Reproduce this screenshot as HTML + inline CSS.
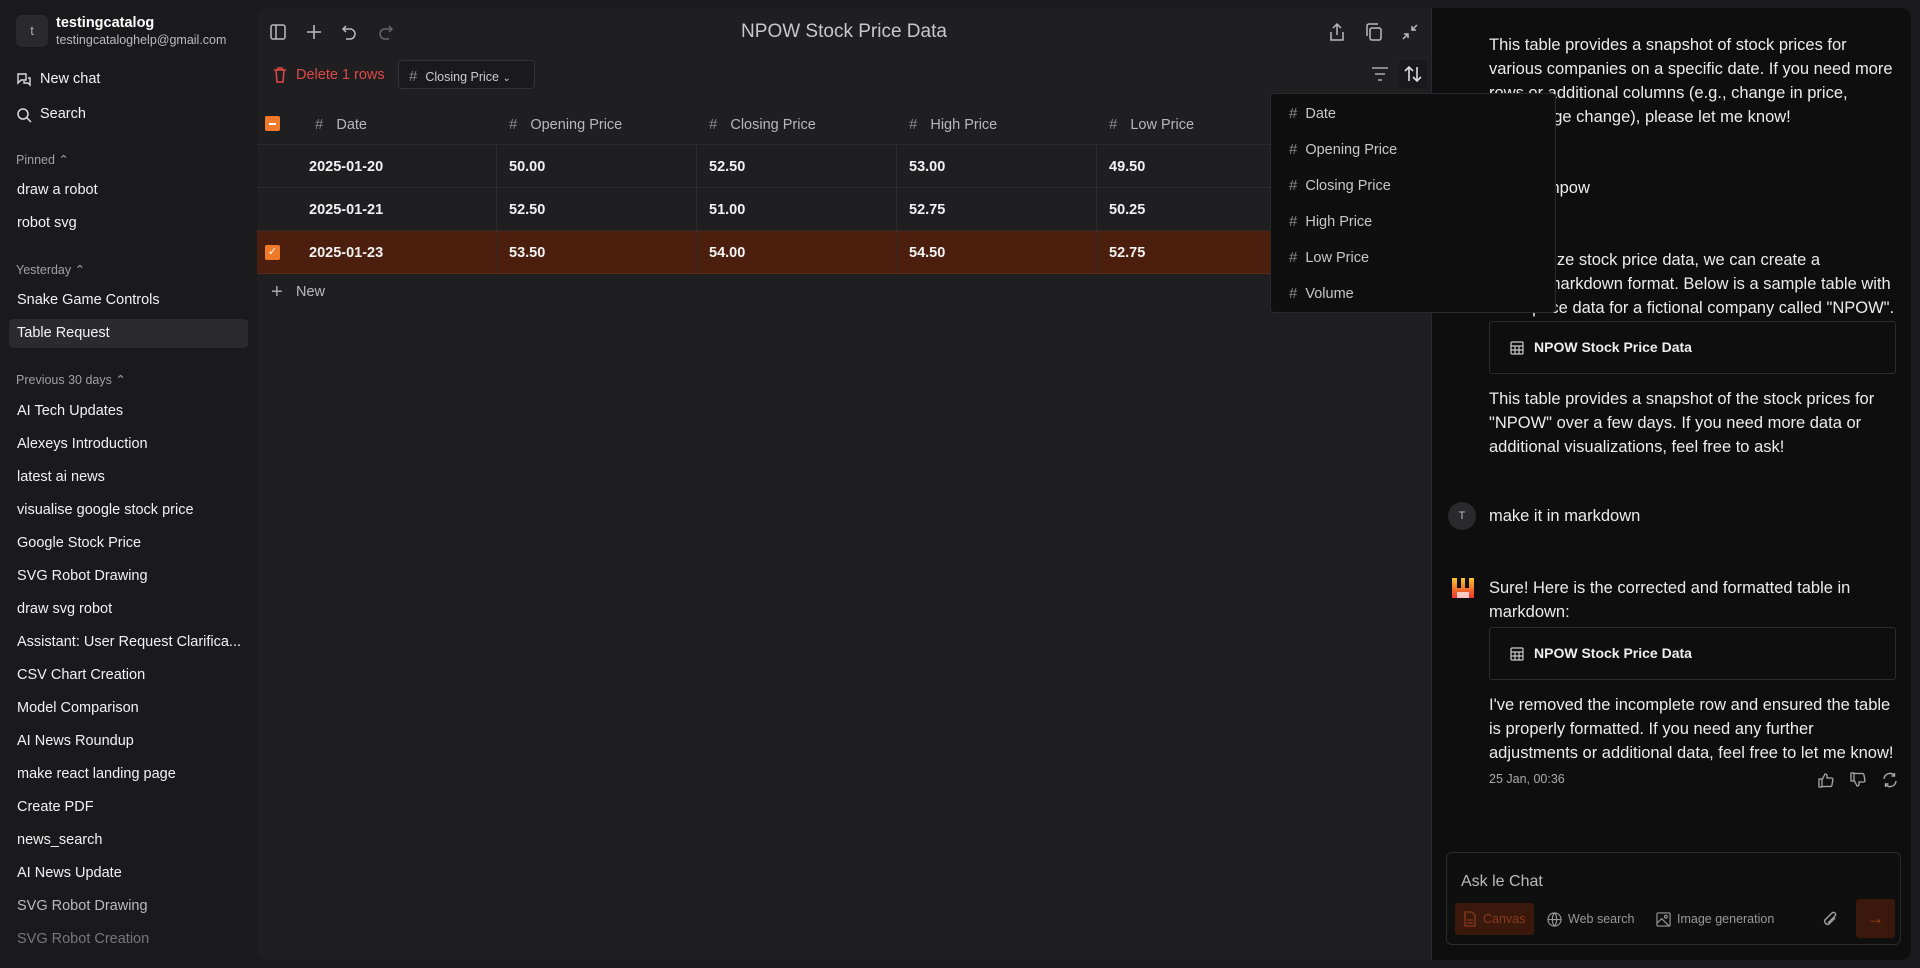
<!DOCTYPE html>
<html><head><meta charset="utf-8"><style>
*{box-sizing:border-box;margin:0;padding:0}
body{width:1920px;height:968px;background:#1a1a1c;font-family:"Liberation Sans",sans-serif;color:#e8e8e8;position:relative;overflow:hidden}
.abs{position:absolute}
.sb{left:0;top:0;width:257px;height:968px;background:#1a1a1c}
.si{position:absolute;left:17px;font-size:14.5px;color:#f2f2f2;white-space:nowrap}
.sh{position:absolute;left:16px;font-size:12.5px;color:#a0a0a0}
.main{left:257px;top:8px;width:1174px;height:952px;background:#1f1f21;border-radius:8px 0 0 8px}
.chat{left:1431px;top:8px;width:480px;height:952px;background:#0e0e0e;border-left:1px solid #2a2a2a;border-radius:0 10px 10px 0}
.ct{position:absolute;left:57px;font-size:16.5px;line-height:24px;color:#ececec;white-space:nowrap}
.card{position:absolute;left:57px;width:407px;height:53px;border:1px solid #2c2c2c;border-radius:3px;font-size:14px;font-weight:bold;color:#eee;padding:17px 0 0 44px}
.hc{position:absolute;top:108px;font-size:14.5px;color:#b8b8b8}
.hash{color:#8a8a8a;margin-right:8px;font-size:15px}
.hc .hash{margin-right:13px}
.row{position:absolute;left:0;width:1174px;height:43px;border-bottom:1px solid #2c2c2e}
.cell{position:absolute;top:14px;font-size:14.5px;font-weight:bold;color:#f2f2f2}
.vl{position:absolute;top:136px;width:1px;height:129px;background:#2c2c2e}
.dd{left:1270px;top:93px;width:286px;height:220px;background:#0f0f10;border:1px solid #2a2a2a;border-radius:4px;z-index:5}
.di{position:absolute;left:18px;font-size:14.5px;color:#c8c8c8}
</style></head><body>
<div class="abs sb">
 <div class="abs" style="left:16px;top:15px;width:32px;height:32px;background:#2a2a2c;border-radius:6px;color:#aaa;font-size:13px;text-align:center;line-height:32px">t</div>
 <div class="abs" style="left:56px;top:15px;font-size:14.5px;font-weight:bold;color:#fff">testingcatalog</div>
 <div class="abs" style="left:56px;top:33px;font-size:12.5px;color:#bbb">testingcataloghelp@gmail.com</div>
 <svg class="abs" style="left:16px;top:72px" width="16" height="16" viewBox="0 0 16 16" fill="none" stroke="#ddd" stroke-width="1.4"><path d="M2 2h8v6H5l-3 3z"/><path d="M12 6h2v7l-2-2H8v-2"/></svg>
 <div class="si" style="left:40px;top:71px">New chat</div>
 <svg class="abs" style="left:16px;top:107px" width="16" height="16" viewBox="0 0 16 16" fill="none" stroke="#ddd" stroke-width="1.5"><circle cx="7" cy="7" r="5"/><path d="M11 11l4 4"/></svg>
 <div class="si" style="left:40px;top:106px">Search</div>
 <div class="sh" style="top:152px">Pinned ⌃</div>
 <div class="si" style="top:182px">draw a robot</div>
 <div class="si" style="top:215px">robot svg</div>
 <div class="sh" style="top:262px">Yesterday ⌃</div>
 <div class="si" style="top:292px">Snake Game Controls</div>
 <div class="abs" style="left:9px;top:319px;width:239px;height:29px;background:#2b2b2e;border-radius:4px"></div>
 <div class="si" style="top:325px">Table Request</div>
 <div class="sh" style="top:372px">Previous 30 days ⌃</div>
 <div class="si" style="top:403px">AI Tech Updates</div>
 <div class="si" style="top:436px">Alexeys Introduction</div>
 <div class="si" style="top:469px">latest ai news</div>
 <div class="si" style="top:502px">visualise google stock price</div>
 <div class="si" style="top:535px">Google Stock Price</div>
 <div class="si" style="top:568px">SVG Robot Drawing</div>
 <div class="si" style="top:601px">draw svg robot</div>
 <div class="si" style="top:634px">Assistant: User Request Clarifica...</div>
 <div class="si" style="top:667px">CSV Chart Creation</div>
 <div class="si" style="top:700px">Model Comparison</div>
 <div class="si" style="top:733px">AI News Roundup</div>
 <div class="si" style="top:766px">make react landing page</div>
 <div class="si" style="top:799px">Create PDF</div>
 <div class="si" style="top:832px">news_search</div>
 <div class="si" style="top:865px">AI News Update</div>
 <div class="si" style="top:898px;color:#bbb">SVG Robot Drawing</div>
 <div class="si" style="top:931px;color:#777">SVG Robot Creation</div>
</div>

<div class="abs main">
 <svg class="abs" style="left:12px;top:15px" width="18" height="18" viewBox="0 0 18 18" fill="none" stroke="#bbb" stroke-width="1.5"><rect x="2" y="2" width="14" height="14" rx="2"/><path d="M7 2v14"/></svg>
 <svg class="abs" style="left:48px;top:15px" width="18" height="18" viewBox="0 0 18 18" stroke="#bbb" stroke-width="1.6"><path d="M9 2v14M2 9h14"/></svg>
 <svg class="abs" style="left:83px;top:15px" width="18" height="18" viewBox="0 0 18 18" fill="none" stroke="#bbb" stroke-width="1.5"><path d="M6 3L3 6l3 3"/><path d="M3 6h7a5 5 0 010 10H6"/></svg>
 <svg class="abs" style="left:120px;top:15px" width="18" height="18" viewBox="0 0 18 18" fill="none" stroke="#666" stroke-width="1.5"><path d="M12 3l3 3-3 3"/><path d="M15 6H8a5 5 0 000 10h4"/></svg>
 <div class="abs" style="left:0;width:1174px;top:13px;text-align:center;font-size:19px;color:#c8c8c8">NPOW Stock Price Data</div>
 <svg class="abs" style="left:1071px;top:14px" width="18" height="20" viewBox="0 0 18 20" fill="none" stroke="#bbb" stroke-width="1.5"><path d="M9 2v11M5 6l4-4 4 4M3 10v8h12v-8"/></svg>
 <svg class="abs" style="left:1107px;top:14px" width="20" height="20" viewBox="0 0 20 20" fill="none" stroke="#bbb" stroke-width="1.5"><rect x="6" y="6" width="11" height="12" rx="2"/><path d="M3 14V4a2 2 0 012-2h9"/></svg>
 <svg class="abs" style="left:1143px;top:14px" width="20" height="20" viewBox="0 0 20 20" fill="none" stroke="#bbb" stroke-width="1.5"><path d="M17 3l-5 5M12 4v4h4M3 17l5-5M4 12h4v4"/></svg>
 <svg class="abs" style="left:16px;top:58px" width="14" height="17" viewBox="0 0 14 17" fill="none" stroke="#e04848" stroke-width="1.5"><path d="M1 4h12M5 4V2h4v2M3 4l1 12h6l1-12"/></svg>
 <div class="abs" style="left:39px;top:59px;font-size:14.5px;color:#e04848">Delete 1 rows</div>
 <div class="abs" style="left:141px;top:52px;width:137px;height:29px;border:1px solid #333;border-radius:4px;background:#1a1a1c;font-size:12.5px;color:#ccc;padding:7px 0 0 10px"><span class="hash">#</span>Closing Price <span style="font-size:10px">⌄</span></div>
 <svg class="abs" style="left:1114px;top:58px" width="18" height="16" viewBox="0 0 18 16" stroke="#aaa" stroke-width="1.5"><path d="M1 2h16M4 8h10M7 14h4"/></svg>
 <div class="abs" style="left:1142px;top:52px;width:28px;height:28px;background:#19191b;border-radius:4px"></div>
 <svg class="abs" style="left:1146px;top:56px" width="20" height="20" viewBox="0 0 20 20" fill="none" stroke="#ddd" stroke-width="1.6"><path d="M6 17V3M2 7l4-4 4 4M14 3v14M10 13l4 4 4-4"/></svg>

 <div class="abs" style="left:8px;top:108px;width:15px;height:15px;background:#f07a2a;border-radius:2px"><div style="margin:7px 4px;height:1.5px;background:#fff"></div></div>
 <div class="hc" style="left:58px"><span class="hash">#</span>Date</div>
 <div class="hc" style="left:252px"><span class="hash">#</span>Opening Price</div>
 <div class="hc" style="left:452px"><span class="hash">#</span>Closing Price</div>
 <div class="hc" style="left:652px"><span class="hash">#</span>High Price</div>
 <div class="hc" style="left:852px"><span class="hash">#</span>Low Price</div>
 <div class="abs" style="left:0;top:136px;width:1174px;height:1px;background:#2c2c2e"></div>
 <div class="row" style="top:137px"><div class="cell" style="left:52px">2025-01-20</div><div class="cell" style="left:252px">50.00</div><div class="cell" style="left:452px">52.50</div><div class="cell" style="left:652px">53.00</div><div class="cell" style="left:852px">49.50</div></div>
 <div class="row" style="top:180px"><div class="cell" style="left:52px">2025-01-21</div><div class="cell" style="left:252px">52.50</div><div class="cell" style="left:452px">51.00</div><div class="cell" style="left:652px">52.75</div><div class="cell" style="left:852px">50.25</div></div>
 <div class="row" style="top:223px;background:#4b1e0d;border-bottom-color:#5a2a18"><div class="abs" style="left:8px;top:14px;width:15px;height:15px;background:#f07a2a;border-radius:2px;color:#fff;font-size:11px;text-align:center;line-height:15px">✓</div><div class="cell" style="left:52px">2025-01-23</div><div class="cell" style="left:252px">53.50</div><div class="cell" style="left:452px">54.00</div><div class="cell" style="left:652px">54.50</div><div class="cell" style="left:852px">52.75</div></div>
 <div class="vl" style="left:239px"></div><div class="vl" style="left:439px"></div><div class="vl" style="left:639px"></div><div class="vl" style="left:839px"></div>
 <div class="abs" style="left:14px;top:273px;font-size:20px;color:#aaa">+</div>
 <div class="abs" style="left:39px;top:276px;font-size:14.5px;color:#bbb">New</div>
</div>

<div class="abs chat">
 <div class="ct" style="top:25px">This table provides a snapshot of stock prices for<br>various companies on a specific date. If you need more<br>rows or additional columns (e.g., change in price,<br>percentage change), please let me know!</div>
 <div class="abs" style="left:16px;top:165px;width:28px;height:28px;border-radius:50%;background:#2a2a2c;color:#bbb;font-size:11px;text-align:center;line-height:28px">T</div>
 <div class="ct" style="top:168px">stock of npow</div>
 <div class="ct" style="top:240px">To visualize stock price data, we can create a<br>table in markdown format. Below is a sample table with<br>stock price data for a fictional company called "NPOW".</div>
 <div class="card" style="top:313px"><svg class="abs" style="left:20px;top:19px" width="14" height="14" viewBox="0 0 14 14" fill="none" stroke="#ccc" stroke-width="1.2"><rect x="1" y="1" width="12" height="12" rx="1"/><path d="M1 5h12M1 9h12M5 5v8M9 5v8"/></svg>NPOW Stock Price Data</div>
 <div class="ct" style="top:379px">This table provides a snapshot of the stock prices for<br>"NPOW" over a few days. If you need more data or<br>additional visualizations, feel free to ask!</div>
 <div class="abs" style="left:16px;top:494px;width:28px;height:28px;border-radius:50%;background:#2a2a2c;color:#bbb;font-size:11px;text-align:center;line-height:28px">T</div>
 <div class="ct" style="top:496px">make it in markdown</div>
 <div class="abs" style="left:20px;top:570px;width:22px;height:20px;background:linear-gradient(#f7c634,#f0692a 60%,#e33 100%)"><div style="position:absolute;left:5px;top:0;width:4px;height:10px;background:#0e0e0e"></div><div style="position:absolute;left:13px;top:0;width:4px;height:10px;background:#0e0e0e"></div><div style="position:absolute;left:5px;top:14px;width:12px;height:6px;background:#fff;opacity:.7"></div></div>
 <div class="ct" style="top:568px">Sure! Here is the corrected and formatted table in<br>markdown:</div>
 <div class="card" style="top:619px"><svg class="abs" style="left:20px;top:19px" width="14" height="14" viewBox="0 0 14 14" fill="none" stroke="#ccc" stroke-width="1.2"><rect x="1" y="1" width="12" height="12" rx="1"/><path d="M1 5h12M1 9h12M5 5v8M9 5v8"/></svg>NPOW Stock Price Data</div>
 <div class="ct" style="top:685px">I've removed the incomplete row and ensured the table<br>is properly formatted. If you need any further<br>adjustments or additional data, feel free to let me know!</div>
 <div class="abs" style="left:57px;top:764px;font-size:12.5px;color:#aaa">25 Jan, 00:36</div>
 <svg class="abs" style="left:386px;top:764px" width="16" height="16" viewBox="0 0 16 16" fill="none" stroke="#aaa" stroke-width="1.3"><path d="M1 7h3v8H1zM4 8l3-6c1.5 0 2 1 2 2v2h4.5c1 0 1.6.8 1.4 1.8l-1 5.5c-.2.8-.8 1.2-1.600 1.2H4"/></svg>
 <svg class="abs" style="left:418px;top:764px" width="16" height="16" viewBox="0 0 16 16" fill="none" stroke="#aaa" stroke-width="1.3"><path d="M1 1h3v8H1zM4 8l3 6c1.5 0 2-1 2-2v-2h4.5c1 0 1.6-.8 1.4-1.8l-1-5.5C13.7 1.9 13.1 1.5 12.3 1.5H4"/></svg>
 <svg class="abs" style="left:450px;top:764px" width="16" height="16" viewBox="0 0 16 16" fill="none" stroke="#aaa" stroke-width="1.4"><path d="M2 7a6 6 0 0110.5-3.5M14 9a6 6 0 01-10.5 3.5M12.5 1v3h-3M3.5 15v-3h3"/></svg>
 <div class="abs" style="left:14px;top:844px;width:455px;height:93px;border:1px solid #2c2c2c;border-radius:6px;background:#0f0f0f">
  <div class="abs" style="left:14px;top:20px;font-size:16px;color:#bbb">Ask le Chat</div>
  <div class="abs" style="left:8px;top:50px;width:79px;height:32px;background:#3a180c;border-radius:3px;font-size:12.5px;color:#8a3a1e;padding:9px 0 0 28px">Canvas<svg class="abs" style="left:8px;top:8px" width="14" height="16" viewBox="0 0 14 16" fill="none" stroke="#8a3a1e" stroke-width="1.3"><path d="M2 1h7l3 3v11H2z"/><path d="M4 9h6M4 12h6"/></svg></div>
  <svg class="abs" style="left:100px;top:59px" width="15" height="15" viewBox="0 0 16 16" fill="none" stroke="#999" stroke-width="1.2"><circle cx="8" cy="8" r="7"/><path d="M1 8h14M8 1c3 3 3 11 0 14M8 1c-3 3-3 11 0 14"/></svg>
  <div class="abs" style="left:121px;top:59px;font-size:12.5px;color:#999">Web search</div>
  <svg class="abs" style="left:209px;top:59px" width="15" height="15" viewBox="0 0 16 16" fill="none" stroke="#999" stroke-width="1.2"><rect x="1" y="1" width="14" height="14" rx="1"/><path d="M1 12l5-5 8 8"/><circle cx="10.5" cy="5" r="1.5"/></svg>
  <div class="abs" style="left:230px;top:59px;font-size:12.5px;color:#999">Image generation</div>
  <svg class="abs" style="left:374px;top:56px" width="18" height="20" viewBox="0 0 18 20" fill="none" stroke="#999" stroke-width="1.5"><path d="M14 9l-6 6a3 3 0 01-4-4l7-7a2 2 0 013 3l-7 7"/></svg>
  <div class="abs" style="left:409px;top:46px;width:39px;height:39px;background:#3a180c;border-radius:3px;color:#9a3f1e;font-size:18px;text-align:center;line-height:39px">→</div>
 </div>
</div>

<div class="abs dd">
 <div class="di" style="top:11px"><span class="hash">#</span>Date</div>
 <div class="di" style="top:47px"><span class="hash">#</span>Opening Price</div>
 <div class="di" style="top:83px"><span class="hash">#</span>Closing Price</div>
 <div class="di" style="top:119px"><span class="hash">#</span>High Price</div>
 <div class="di" style="top:155px"><span class="hash">#</span>Low Price</div>
 <div class="di" style="top:191px"><span class="hash">#</span>Volume</div>
</div>
</body></html>
